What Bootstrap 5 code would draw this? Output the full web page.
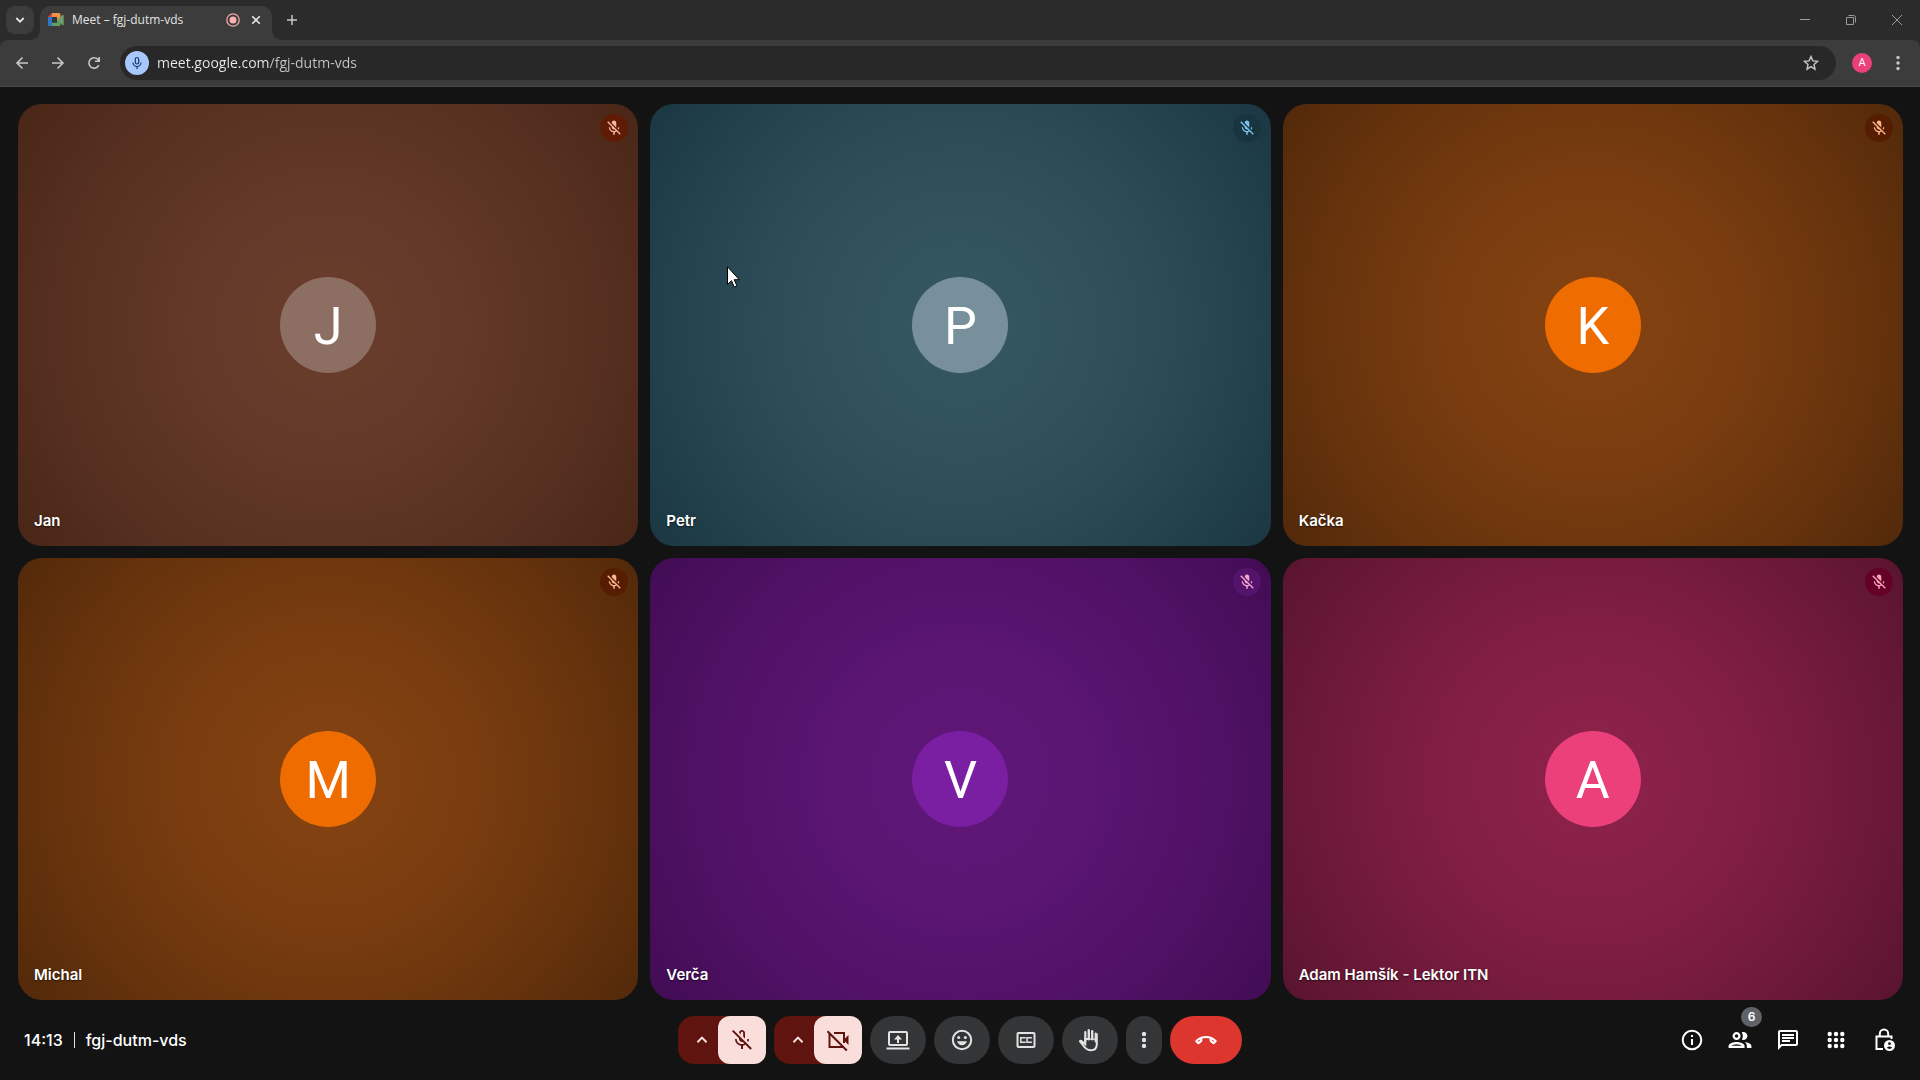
<!DOCTYPE html>
<html lang="cs">
<head>
<meta charset="utf-8">
<meta name="viewport" content="width=device-width, initial-scale=1">
<title>Meet – fgj-dutm-vds</title>
<link rel="stylesheet" href="https://cdn.jsdelivr.net/npm/bootstrap@5.3.0/dist/css/bootstrap.min.css">
<style>
  body { background: #131313; color: #fff; font-family: Inter, "Noto Sans", sans-serif; font-size: 16px; line-height: 24px; }
  button { border: 0; padding: 0; background: none; color: inherit; }
  svg { display: block; flex: none; }

  /* browser chrome */
  .browser-ui { background: #2b2b2b; color: #c7c7c7; font-family: "Open Sans", "Noto Sans", sans-serif; }
  .tab-strip { height: 40px; padding-left: 6px; }
  .tab-search { width: 28px; height: 28px; border-radius: 9px; background: #3c3c3c; color: #e3e3e3; }
  .page-tab { position: relative; width: 232px; height: 34px; margin-left: 6px; padding: 0 4px 6px 8px; border-radius: 10px 10px 0 0; background: #3c3c3c; color: #e3e3e3; font-size: 12px; line-height: 16px; }
  .page-tab::before, .page-tab::after { content: ""; position: absolute; bottom: 0; width: 10px; height: 10px; }
  .page-tab::before { right: 100%; background: radial-gradient(circle at 0 0, transparent 10px, #3c3c3c 10px); }
  .page-tab::after { left: 100%; background: radial-gradient(circle at 100% 0, transparent 10px, #3c3c3c 10px); }
  .tab-tool { width: 24px; height: 24px; }
  .new-tab { width: 40px; height: 28px; }
  .win-btn { width: 46px; height: 40px; color: #9a9a9a; }
  .tool-bar { height: 47px; padding: 0 4px; background: #3c3c3c; border-bottom: 1px solid #4a4a4a; border-radius: 8px 8px 0 0; }
  .nav-btn { width: 36px; height: 34px; }
  .address-bar { height: 34px; margin-left: 8px; padding: 0 5px; border-radius: 17px; background: #282828; }
  .mic-chip { width: 24px; height: 24px; border-radius: 50%; background: #a8c7fa; color: #123a78; }
  .address-input { border: 0; outline: 0; padding: 0; margin-left: 8px; font-size: 14px; line-height: 20px; color: #e3e3e3;
    background: linear-gradient(90deg, #ececec 112px, #c4c7ca 112px); -webkit-background-clip: text; background-clip: text; -webkit-text-fill-color: transparent; }
  .profile-dot { width: 20px; height: 20px; margin: 0 16px; border-radius: 50%; background: #ec407a; color: #fff; font: 11px/20px Roboto, sans-serif; }
  .menu-btn { width: 20px; height: 34px; margin-right: 8px; }

  /* participants */
  .stage { padding: 17px 17px 0 18px; grid-template-columns: repeat(3, 1fr); grid-template-rows: repeat(2, 1fr); gap: 12px; }
  .tile { position: relative; border-radius: 24px; background: radial-gradient(circle, var(--mid), 62%, var(--rim)); }
  .tile-brown { --mid: #6a3e2d; --rim: #492617; --dot: #8d6e63; --badge: #5f1b06; --mic: #ffb59b; }
  .tile-teal { --mid: #365863; --rim: #1a3742; --dot: #78909c; --badge: #18343f; --mic: #7fc4ee; }
  .tile-orange { --mid: #864311; --rim: #52290a; --dot: #ef6c00; --badge: #571d02; --mic: #ffb691; }
  .tile-purple { --mid: #60187a; --rim: #420c54; --dot: #7b1fa2; --badge: #55146c; --mic: #f3a9cf; }
  .tile-pink { --mid: #8f224a; --rim: #59142e; --dot: #ec407a; --badge: #650027; --mic: #ffa6bd; }
  .avatar-dot { width: 96px; height: 96px; border-radius: 50%; background: var(--dot); font-family: Roboto, sans-serif; font-size: 52px; line-height: 99px; }
  .muted-badge { position: absolute; top: 10px; right: 10px; width: 28px; height: 28px; border-radius: 50%; background: var(--badge); color: var(--mic); }
  .tile-name { position: absolute; left: 16px; bottom: 13px; font-size: 15px; font-weight: 600; text-shadow: 0 1px 2px rgba(0,0,0,.6); }
  .pointer { position: absolute; left: 727px; top: 266px; }

  /* call bar */
  .call-bar { height: 80px; padding: 0 12px; }
  .side { flex: 1 1 0; min-width: 0; }
  .meeting-info { font-weight: 500; }
  .clock { margin-left: 12px; }
  .rule { width: 1px; height: 16px; background: #e3e3e3; margin: 0 11px; }
  .split { width: 88px; height: 48px; border-radius: 16px; background: #601410; color: #f9dedc; }
  .split-main { width: 48px; height: 48px; border-radius: 12px; background: #f9dedc; color: #601410; }
  .ctl { width: 56px; height: 48px; border-radius: 24px; background: #333537; color: #e3e3e3; }
  .ctl-more { width: 36px; border-radius: 18px; }
  .ctl-end { width: 72px; background: #dc362e; color: #fff; }
  .side-btn { position: relative; width: 48px; height: 48px; }
  .count-bubble { position: absolute; left: 25px; top: -9px; width: 21px; height: 20px; border-radius: 10px; background: #5f6368; font-size: 12px; line-height: 20px; font-weight: 600; }
</style>
</head>
<body class="d-flex flex-column min-vh-100 overflow-hidden">

<svg width="0" height="0" class="position-absolute" aria-hidden="true">
  <symbol id="i-muted" viewBox="0 0 24 24"><path fill="currentColor" d="M19 11h-1.7c0 .74-.16 1.43-.43 2.05l1.23 1.23c.56-.98.9-2.09.9-3.28zm-4.02.17c0-.06.02-.11.02-.17V5c0-1.66-1.34-3-3-3S9 3.34 9 5v.18l5.98 5.99zM4.27 3L3 4.27l6.01 6.01V11c0 1.66 1.33 3 2.99 3 .22 0 .44-.03.65-.08l1.66 1.66c-.71.33-1.5.52-2.31.52-2.76 0-5.3-2.1-5.3-5.1H5c0 3.41 2.72 6.23 6 6.72V21h2v-3.28c.91-.13 1.77-.45 2.54-.9L19.73 21 21 19.73 4.27 3z"/></symbol>
  <symbol id="i-up" viewBox="0 0 24 24"><path fill="none" stroke="currentColor" stroke-width="2.4" d="M6.500 14.700 12 9.200l5.500 5.500"/></symbol>
  <symbol id="i-dots" viewBox="0 0 24 24"><g fill="currentColor"><circle cx="12" cy="6" r="2.200"/><circle cx="12" cy="12" r="2.200"/><circle cx="12" cy="18" r="2.200"/></g></symbol>
</svg>

<header class="browser-ui">
  <div class="tab-strip d-flex align-items-center">
    <button class="tab-search d-flex align-items-center justify-content-center" aria-label="Search tabs"><svg width="12" height="12" viewBox="0 0 12 12"><path d="m2.3 4 3.7 3.7L9.700 4" fill="none" stroke="currentColor" stroke-width="1.800"/></svg></button>
    <div class="page-tab d-flex align-items-center align-self-end">
      <svg width="16" height="14" viewBox="0 0 16 14"><path d="M0 4h4v9H1.500Q0 13 0 11.500z" fill="#2f78c8"/><path d="M4 0v4H0z" fill="#ea4335"/><path d="M4 0h7q1.500 0 1.500 1.500V7H9V4H4z" fill="#f0924c"/><path d="M4 13V9.500h5V6.500l3.500.5v4.500q0 1.500-1.500 1.500z" fill="#5f9e62"/><path d="m9 7 5.500-5q1.200-.6 1.200.6v9q0 1-1.200.4z" fill="#72a06d"/><path d="M4 4h5v5.500H4z" fill="#303640"/></svg>
      <span class="ms-2 text-nowrap flex-grow-1">Meet – fgj-dutm-vds</span>
      <svg width="14" height="14" viewBox="0 0 14 14" class="me-1"><circle cx="7" cy="7" r="6.200" fill="none" stroke="#f2a9a9" stroke-width="1.300"/><circle cx="7" cy="7" r="3.500" fill="#ffb1b1"/></svg>
      <button class="tab-tool d-flex align-items-center justify-content-center" aria-label="Close tab"><svg width="10" height="10" viewBox="0 0 10 10"><path d="m1.200 1.200 7.600 7.600m0-7.600-7.600 7.600" stroke="currentColor" stroke-width="1.600"/></svg></button>
    </div>
    <button class="new-tab d-flex align-items-center justify-content-center" aria-label="New tab"><svg width="12" height="12" viewBox="0 0 12 12"><path d="M6 1v10M1 6h10" stroke="currentColor" stroke-width="1.500"/></svg></button>
    <div class="d-flex ms-auto">
      <button class="win-btn d-flex align-items-center justify-content-center" aria-label="Minimize"><svg width="10" height="10" viewBox="0 0 10 10"><path d="M0 4.500h10" stroke="currentColor"/></svg></button>
      <button class="win-btn d-flex align-items-center justify-content-center" aria-label="Restore"><svg width="10" height="10" viewBox="0 0 10 10"><path d="M.5 2.500h7v7h-7zM2.500.5h5q2 0 2 2v5" fill="none" stroke="currentColor"/></svg></button>
      <button class="win-btn d-flex align-items-center justify-content-center" aria-label="Close"><svg width="10" height="10" viewBox="0 0 10 10"><path d="m0 0 10 10M10 0 0 10" stroke="currentColor"/></svg></button>
    </div>
  </div>
  <div class="tool-bar d-flex align-items-center">
    <button class="nav-btn d-flex align-items-center justify-content-center" aria-label="Back"><svg width="14" height="14" viewBox="0 0 14 14"><path d="M13 7H2m5.500-5.500L2 7l5.500 5.500" fill="none" stroke="currentColor" stroke-width="1.600"/></svg></button>
    <button class="nav-btn d-flex align-items-center justify-content-center" aria-label="Forward"><svg width="14" height="14" viewBox="0 0 14 14"><path d="M1 7h11M6.500 1.500 12 7l-5.500 5.500" fill="none" stroke="currentColor" stroke-width="1.600"/></svg></button>
    <button class="nav-btn d-flex align-items-center justify-content-center" aria-label="Reload"><svg width="14" height="14" viewBox="0 0 14 14"><path d="M11.800 9.200A5.200 5.200 0 1 1 11 3.500l1 1.200M12.200 1v4.200H8" fill="none" stroke="currentColor" stroke-width="1.600"/></svg></button>
    <div class="address-bar d-flex align-items-center flex-grow-1">
      <span class="mic-chip d-flex align-items-center justify-content-center"><svg width="14" height="14" viewBox="0 0 14 14"><rect x="5.300" y="1.500" width="3.400" height="6.500" rx="1.700" fill="none" stroke="currentColor" stroke-width="1.200"/><path d="M3 6.500a4 4 0 0 0 8 0M7 10.500V13" fill="none" stroke="currentColor" stroke-width="1.200"/></svg></span>
      <input class="address-input flex-grow-1" type="text" aria-label="Address" value="meet.google.com/fgj-dutm-vds">
      <button class="me-2 pe-1" aria-label="Bookmark"><svg width="16" height="16" viewBox="0 0 16 16"><path d="m8 1.500 1.900 4.400 4.600.5-3.500 3.100 1 4.700L8 11.700l-4 2.500 1-4.700-3.500-3.100 4.600-.5z" fill="none" stroke="currentColor" stroke-width="1.400"/></svg></button>
    </div>
    <button class="profile-dot text-center" aria-label="Profile">A</button>
    <button class="menu-btn d-flex align-items-center justify-content-center" aria-label="Menu"><svg width="20" height="20" viewBox="0 0 20 20"><g fill="currentColor"><circle cx="10" cy="4.500" r="1.700"/><circle cx="10" cy="10" r="1.700"/><circle cx="10" cy="15.500" r="1.700"/></g></svg></button>
  </div>
</header>

<main class="stage d-grid flex-grow-1">
  <section class="tile tile-brown d-flex align-items-center justify-content-center">
    <div class="avatar-dot text-center">J</div><span class="tile-name">Jan</span>
    <span class="muted-badge d-flex align-items-center justify-content-center"><svg width="18" height="18"><use href="#i-muted"/></svg></span>
  </section>
  <section class="tile tile-teal d-flex align-items-center justify-content-center">
    <div class="avatar-dot text-center">P</div><span class="tile-name">Petr</span>
    <span class="muted-badge d-flex align-items-center justify-content-center"><svg width="18" height="18"><use href="#i-muted"/></svg></span>
  </section>
  <section class="tile tile-orange d-flex align-items-center justify-content-center">
    <div class="avatar-dot text-center">K</div><span class="tile-name">Kačka</span>
    <span class="muted-badge d-flex align-items-center justify-content-center"><svg width="18" height="18"><use href="#i-muted"/></svg></span>
  </section>
  <section class="tile tile-orange d-flex align-items-center justify-content-center">
    <div class="avatar-dot text-center">M</div><span class="tile-name">Michal</span>
    <span class="muted-badge d-flex align-items-center justify-content-center"><svg width="18" height="18"><use href="#i-muted"/></svg></span>
  </section>
  <section class="tile tile-purple d-flex align-items-center justify-content-center">
    <div class="avatar-dot text-center">V</div><span class="tile-name">Verča</span>
    <span class="muted-badge d-flex align-items-center justify-content-center"><svg width="18" height="18"><use href="#i-muted"/></svg></span>
  </section>
  <section class="tile tile-pink d-flex align-items-center justify-content-center">
    <div class="avatar-dot text-center">A</div><span class="tile-name">Adam Hamšík - Lektor ITN</span>
    <span class="muted-badge d-flex align-items-center justify-content-center"><svg width="18" height="18"><use href="#i-muted"/></svg></span>
  </section>
</main>

<footer class="call-bar d-flex align-items-center">
  <div class="side meeting-info d-flex align-items-center">
    <span class="clock">14:13</span><span class="rule"></span><span>fgj-dutm-vds</span>
  </div>
  <div class="d-flex gap-2">
    <div class="split d-flex">
      <button class="flex-grow-1 d-flex align-items-center justify-content-center ps-2" aria-label="Audio settings"><svg width="20" height="20"><use href="#i-up"/></svg></button>
      <button class="split-main d-flex align-items-center justify-content-center" aria-label="Turn on microphone"><svg width="24" height="24" viewBox="0 0 24 24"><path fill="currentColor" d="M10.800 4.900c0-.66.54-1.200 1.200-1.200s1.200.54 1.200 1.200l-.01 3.910L15 10.600V5c0-1.660-1.340-3-3-3-1.540 0-2.790 1.160-2.960 2.650l1.760 1.760V4.900zM19 11h-1.700c0 .58-.1 1.130-.27 1.640l1.270 1.270c.44-.88.7-1.870.7-2.910zM3.400 1.900 2 3.300l7 7V11c0 1.660 1.340 3 3 3 .23 0 .44-.03.65-.08l1.660 1.660c-.71.33-1.500.52-2.310.52-2.760 0-5.300-2.100-5.300-5.100H5c0 3.410 2.720 6.230 6 6.720V21h2v-3.280c.91-.13 1.770-.45 2.550-.9l4.900 4.900 1.410-1.410z"/></svg></button>
    </div>
    <div class="split d-flex">
      <button class="flex-grow-1 d-flex align-items-center justify-content-center ps-2" aria-label="Video settings"><svg width="20" height="20"><use href="#i-up"/></svg></button>
      <button class="split-main d-flex align-items-center justify-content-center" aria-label="Turn on camera"><svg width="24" height="24" viewBox="0 0 24 24"><path fill="none" stroke="currentColor" stroke-width="2" d="M1.500 3.200 20.800 22.500M3.500 5v14h13.500M8 5h10v10"/><path fill="currentColor" d="m18.500 11 4-4v10l-4-4z"/></svg></button>
    </div>
    <button class="ctl d-flex align-items-center justify-content-center" aria-label="Present now"><svg width="24" height="24" viewBox="0 0 24 24"><rect x="3" y="4" width="18" height="13" rx="1" fill="none" stroke="currentColor" stroke-width="2"/><path d="M.5 19.500h23v2H.5zM11 15v-3.500H8L12 7l4 4.500h-3V15z" fill="currentColor"/></svg></button>
    <button class="ctl d-flex align-items-center justify-content-center" aria-label="Send a reaction"><svg width="24" height="24" viewBox="0 0 24 24"><circle cx="12" cy="12" r="9.200" fill="none" stroke="currentColor" stroke-width="2"/><circle cx="8.700" cy="9.500" r="1.500" fill="currentColor"/><circle cx="15.300" cy="9.500" r="1.500" fill="currentColor"/><path d="M7 13.300h10c-.6 2.300-2.600 4-5 4s-4.400-1.700-5-4z" fill="currentColor"/></svg></button>
    <button class="ctl d-flex align-items-center justify-content-center" aria-label="Turn on captions"><svg width="24" height="24" viewBox="0 0 24 24"><rect x="3.500" y="5" width="17" height="14" rx="1" fill="none" stroke="currentColor" stroke-width="2"/><path d="M11 10.500V9.700H6.800v4.600H11v-.8M17.200 10.500V9.700H13v4.600h4.200v-.8" fill="none" stroke="currentColor" stroke-width="1.500"/></svg></button>
    <button class="ctl d-flex align-items-center justify-content-center" aria-label="Raise hand"><svg width="24" height="24" viewBox="0 0 24 24"><path d="M7.300 4v9.500M10.700 2v9.500M14.200 3v8.500M17.700 5.500v8" fill="none" stroke="currentColor" stroke-width="2.200" stroke-linecap="round"/><path d="M7.300 10v6.200L3.500 13.100q-1-.7-1.500.2L7 19.500q2 2.700 5.800 2.700 6 0 6-6V5.500" fill="none" stroke="currentColor" stroke-width="2"/><path d="M7 10h4.300v2H7zM10 3h1.800v9H10zM13.300 3h1.800v9h-1.800zM11 10.500h7v1.300h-7z" fill="currentColor"/></svg></button>
    <button class="ctl ctl-more d-flex align-items-center justify-content-center" aria-label="More options"><svg width="24" height="24"><use href="#i-dots"/></svg></button>
    <button class="ctl ctl-end d-flex align-items-center justify-content-center" aria-label="Leave call"><svg width="24" height="24" viewBox="0 0 24 24"><path d="M12 8c-4 0-7.600 1.500-10.300 4.200-.6.600-.6 1.300 0 1.900l1.700 1.700c.5.500 1.200.6 1.800.1l2.500-1.900c.4-.3.600-.7.600-1.200v-2.200c1.200-.4 2.400-.6 3.700-.6s2.500.2 3.700.6v2.200c0 .5.200.9.600 1.200l2.500 1.900c.6.500 1.300.4 1.800-.1l1.700-1.700c.6-.6.600-1.300 0-1.900C19.600 9.500 16 8 12 8zm-5.700 3.400v.9l-1.900 1.500-.7-.7c.8-.7 1.700-1.300 2.600-1.700zm11.400 0c.9.400 1.800 1 2.600 1.700l-.7.700-1.900-1.500z" fill="currentColor"/></svg></button>
  </div>
  <div class="side d-flex justify-content-end">
    <button class="side-btn d-flex align-items-center justify-content-center" aria-label="Meeting details"><svg width="24" height="24" viewBox="0 0 24 24"><circle cx="12" cy="12" r="9.300" fill="none" stroke="currentColor" stroke-width="2"/><path d="M11 7h2v2h-2zm0 4h2v6h-2z" fill="currentColor"/></svg></button>
    <button class="side-btn d-flex align-items-center justify-content-center" aria-label="People"><svg width="24" height="24" viewBox="1.500 1.500 21 21"><path fill="currentColor" d="M9 13.750c-2.340 0-7 1.170-7 3.500V19h14v-1.750c0-2.330-4.660-3.500-7-3.500zM4.340 17c.84-.58 2.870-1.250 4.660-1.250s3.820.67 4.660 1.250H4.340zM9 12c1.930 0 3.500-1.570 3.500-3.500S10.930 5 9 5 5.500 6.570 5.500 8.500 7.070 12 9 12zm0-5c.83 0 1.500.67 1.500 1.500S9.830 10 9 10s-1.500-.67-1.500-1.500S8.170 7 9 7zm7.040 6.810c1.160.84 1.960 1.960 1.960 3.440V19h4v-1.750c0-2.020-3.500-3.170-5.960-3.440zM15 12c1.930 0 3.500-1.570 3.500-3.500S16.930 5 15 5c-.54 0-1.040.13-1.500.35.63.89 1 1.980 1 3.150s-.37 2.260-1 3.150c.46.22.96.35 1.500.35z"/></svg><span class="count-bubble">6</span></button>
    <button class="side-btn d-flex align-items-center justify-content-center" aria-label="Chat"><svg width="24" height="24" viewBox="0 0 24 24"><path fill="currentColor" d="M4 4h16v12H5.170L4 17.170V4m0-2c-1.100 0-1.990.9-1.990 2L2 22l4-4h14c1.100 0 2-.9 2-2V4c0-1.100-.9-2-2-2H4zm2 10h8v2H6v-2zm0-3h12v2H6V9zm0-3h12v2H6V6z"/></svg></button>
    <button class="side-btn d-flex align-items-center justify-content-center" aria-label="Activities"><svg width="24" height="24" viewBox="0 0 24 24"><g fill="currentColor"><circle cx="5.700" cy="6" r="2.200"/><circle cx="12" cy="6" r="2.200"/><circle cx="18.300" cy="6" r="2.200"/><circle cx="5.700" cy="12" r="2.200"/><circle cx="12" cy="12" r="2.200"/><circle cx="18.300" cy="12" r="2.200"/><circle cx="5.700" cy="18" r="2.200"/><circle cx="12" cy="18" r="2.200"/><circle cx="18.300" cy="18" r="2.200"/></g></svg></button>
    <button class="side-btn d-flex align-items-center justify-content-center" aria-label="Host controls"><svg width="24" height="24" viewBox="0 0 24 24"><path d="M11 21H4.500V8.500h15V11M7.800 8V5.700a4.200 4.200 0 0 1 8.400 0V8" fill="none" stroke="currentColor" stroke-width="2"/><circle cx="17.500" cy="17.500" r="5.500" fill="currentColor"/><circle cx="17.500" cy="15.700" r="1.400" fill="#131313"/><path d="M14.800 19.800q2.700-2.400 5.400 0-2.700 2.200-5.400 0z" fill="#131313"/></svg></button>
  </div>
</footer>

<svg class="pointer" width="13" height="22" viewBox="0 0 13 22" aria-hidden="true"><path d="M.5.800v17.600l4-3.700 2.700 6.300 2.700-1.200-2.700-6.100h5.100z" fill="#fff" stroke="#000" stroke-width="1"/></svg>

<script src="https://cdn.jsdelivr.net/npm/bootstrap@5.3.0/dist/js/bootstrap.bundle.min.js"></script>
</body>
</html>
